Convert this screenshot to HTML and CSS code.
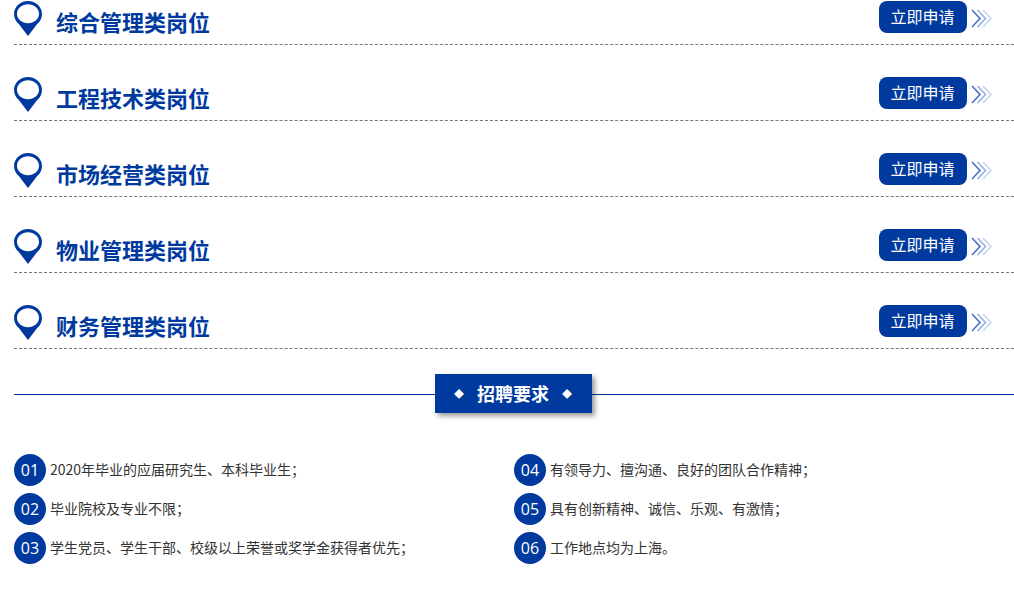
FILE: index.html
```html
<!DOCTYPE html>
<html lang="zh-CN">
<head>
<meta charset="utf-8">
<title>招聘</title>
<link rel="stylesheet" href="styles.css">
</head>
<body>
<svg class="defs" width="0" height="0" aria-hidden="true">
  <symbol id="pin" viewBox="0 0 28 35">
    <path fill="#003a9e" fill-rule="evenodd" d="M14 0C6.300 0 0 5.800 0 13c0 4.200 2 7.800 5 10.200L14 35l9-11.800c3-2.400 5-6 5-10.200C28 5.800 21.700 0 14 0ZM14 3.200c6.200 0 11 4.300 11 9.500s-4.800 9.500-11 9.500-11-4.300-11-9.500 4.800-9.500 11-9.500Z"/>
  </symbol>
  <symbol id="chev" viewBox="0 0 21 20">
    <path d="M1 1l8 8.500-8 8.500" fill="none" stroke="#3f6cc4" stroke-width="1.500"/>
    <path d="M6.500 1l8 8.500-8 8.500" fill="none" stroke="#92ace0" stroke-width="1.500"/>
    <path d="M12 1l8 8.500-8 8.500" fill="none" stroke="#c4d2ee" stroke-width="1.500"/>
  </symbol>
</svg>
<main class="page">
  <section class="jobs">
    <div class="job"><svg class="pin"><use href="#pin"/></svg><h3>综合管理类岗位</h3><a class="apply">立即申请</a><svg class="chev"><use href="#chev"/></svg></div>
    <div class="job"><svg class="pin"><use href="#pin"/></svg><h3>工程技术类岗位</h3><a class="apply">立即申请</a><svg class="chev"><use href="#chev"/></svg></div>
    <div class="job"><svg class="pin"><use href="#pin"/></svg><h3>市场经营类岗位</h3><a class="apply">立即申请</a><svg class="chev"><use href="#chev"/></svg></div>
    <div class="job"><svg class="pin"><use href="#pin"/></svg><h3>物业管理类岗位</h3><a class="apply">立即申请</a><svg class="chev"><use href="#chev"/></svg></div>
    <div class="job"><svg class="pin"><use href="#pin"/></svg><h3>财务管理类岗位</h3><a class="apply">立即申请</a><svg class="chev"><use href="#chev"/></svg></div>
  </section>
  <div class="heading">
    <h2><span class="dia">◆</span><span class="title">招聘要求</span><span class="dia">◆</span></h2>
  </div>
  <ul class="reqs">
    <li><b>01</b><span>2020年毕业的应届研究生、本科毕业生；</span></li>
    <li><b>04</b><span>有领导力、擅沟通、良好的团队合作精神；</span></li>
    <li><b>02</b><span>毕业院校及专业不限；</span></li>
    <li><b>05</b><span>具有创新精神、诚信、乐观、有激情；</span></li>
    <li><b>03</b><span>学生党员、学生干部、校级以上荣誉或奖学金获得者优先；</span></li>
    <li><b>06</b><span>工作地点均为上海。</span></li>
  </ul>
</main>
</body>
</html>
```
FILE: styles.css
```css
* { box-sizing: border-box; }
html, body { margin: 0; padding: 0; background: #fff; overflow: hidden; }
body { font-family: "Noto Sans CJK SC", "Liberation Sans", sans-serif; }
.defs { position: absolute; }
.page { padding-left: 14px; }
.jobs { display: flex; flex-direction: column; gap: 31px; }
.job {
  display: flex;
  align-items: flex-start;
  height: 45px;
  border-bottom: 1px dashed #777;
  margin: 0;
}
.pin { width: 28px; height: 35px; margin-top: 1px; flex: none; }
.job h3 {
  margin: 5px 0 0 14px;
  flex: 1;
  font-size: 22px;
  line-height: 32px;
  font-weight: 700;
  color: #003a9e;
}
.apply {
  width: 88px;
  height: 32px;
  margin-top: 1px;
  padding-right: 1px;
  border-radius: 8px;
  background: #003a9e;
  color: #fff;
  font-size: 16px;
  line-height: 30px;
  text-align: center;
}
.chev { width: 21px; height: 20px; margin: 9px 22px 0 4px; flex: none; }
.heading {
  display: flex;
  justify-content: center;
  align-items: center;
  height: 39px;
  margin-top: 25px;
  padding-right: 1px;
  background: linear-gradient(#003a9e, #003a9e) 0 20px / 100% 1px no-repeat;
}
.heading h2 {
  display: flex;
  justify-content: center;
  align-items: center;
  gap: 13px;
  width: 157px;
  height: 39px;
  margin: 0;
  padding-right: 1px;
  background: #003a9e;
  color: #fff;
  font-size: 18px;
  line-height: 36px;
  font-weight: 700;
  box-shadow: 3px 3px 5px rgba(0, 0, 0, .4);
}
.title { margin-bottom: 2px; }
.dia { font-size: 10px; }
.reqs {
  list-style: none;
  display: grid;
  grid-template-columns: 500px 500px;
  grid-auto-rows: 39px;
  margin: 41px 0 0;
  padding: 0;
}
.reqs li {
  display: flex;
  align-items: center;
  gap: 4px;
  height: 32px;
  font-size: 14px;
  color: #333;
}
.reqs span { margin-bottom: 2px; }
.reqs b {
  width: 32px;
  height: 32px;
  border-radius: 50%;
  background: #003a9e;
  color: #fff;
  font-family: "Open Sans", "Liberation Sans", sans-serif;
  font-size: 16px;
  font-weight: 400;
  line-height: 32px;
  text-align: center;
  flex: none;
}
```
